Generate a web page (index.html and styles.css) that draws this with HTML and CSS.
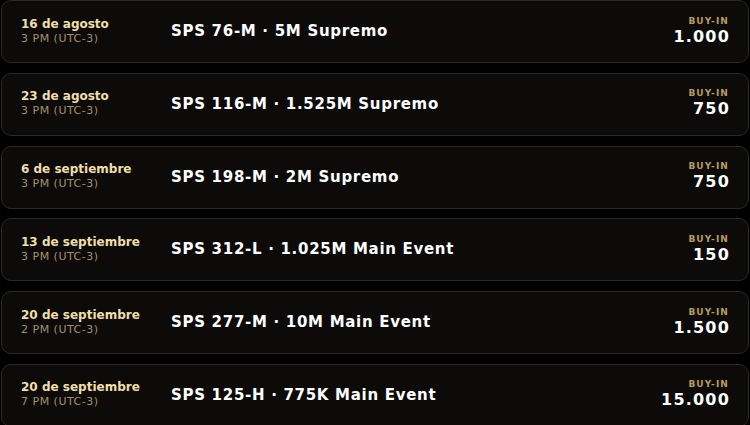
FILE: index.html
```html
<!DOCTYPE html>
<html lang="es">
<head>
<meta charset="utf-8">
<link rel="stylesheet" href="styles.css">
</head>
<body>
<div class="list">
  <div class="card">
    <div class="when"><div class="date">16 de agosto</div><div class="time">3 PM (UTC-3)</div></div>
    <div class="title">SPS 76-M · 5M Supremo</div>
    <div class="buy"><div class="label">BUY-IN</div><div class="amount">1.000</div></div>
  </div>
  <div class="card">
    <div class="when"><div class="date">23 de agosto</div><div class="time">3 PM (UTC-3)</div></div>
    <div class="title">SPS 116-M · 1.525M Supremo</div>
    <div class="buy"><div class="label">BUY-IN</div><div class="amount">750</div></div>
  </div>
  <div class="card">
    <div class="when"><div class="date">6 de septiembre</div><div class="time">3 PM (UTC-3)</div></div>
    <div class="title">SPS 198-M · 2M Supremo</div>
    <div class="buy"><div class="label">BUY-IN</div><div class="amount">750</div></div>
  </div>
  <div class="card">
    <div class="when"><div class="date">13 de septiembre</div><div class="time">3 PM (UTC-3)</div></div>
    <div class="title">SPS 312-L · 1.025M Main Event</div>
    <div class="buy"><div class="label">BUY-IN</div><div class="amount">150</div></div>
  </div>
  <div class="card">
    <div class="when"><div class="date">20 de septiembre</div><div class="time">2 PM (UTC-3)</div></div>
    <div class="title">SPS 277-M · 10M Main Event</div>
    <div class="buy"><div class="label">BUY-IN</div><div class="amount">1.500</div></div>
  </div>
  <div class="card">
    <div class="when"><div class="date">20 de septiembre</div><div class="time">7 PM (UTC-3)</div></div>
    <div class="title">SPS 125-H · 775K Main Event</div>
    <div class="buy"><div class="label">BUY-IN</div><div class="amount">15.000</div></div>
  </div>
</div>
</body>
</html>
```
FILE: styles.css
```css
* { box-sizing: border-box; }
html, body { margin: 0; padding: 0; background: #000; }
body {
  width: 750px;
  height: 425px;
  overflow: hidden;
  font-family: "DejaVu Sans", "Liberation Sans", sans-serif;
}
.list {
  display: flex;
  flex-direction: column;
  gap: 9.75px;
  padding: 0 1px;
}
.card {
  height: 63px;
  display: flex;
  align-items: center;
  border: 1px solid #2c2923;
  border-radius: 10px;
  background: #0c0b0a;
  padding: 0 19px 0 19px;
}
.when { width: 150px; margin-top: -1px; }
.date {
  color: #f1dfa8;
  font-weight: 700;
  font-size: 12px;
  line-height: 14px;
  letter-spacing: 0;
}
.time {
  color: #a69068;
  font-size: 11px;
  line-height: 14px;
  letter-spacing: 0.5px;
  margin-top: 1px;
}
.title {
  flex: 1;
  color: #fff;
  font-weight: 700;
  font-size: 15px;
  letter-spacing: 0.7px;
  margin-top: -1px;
}
.buy { text-align: right; margin-top: -2px; }
.label {
  color: #b89a63;
  font-weight: 700;
  font-size: 9px;
  letter-spacing: 1.1px;
  line-height: 12px;
}
.amount {
  color: #fff;
  font-weight: 700;
  font-size: 16px;
  line-height: 20px;
  letter-spacing: 1.2px;
  margin-right: -1px;
}
```
